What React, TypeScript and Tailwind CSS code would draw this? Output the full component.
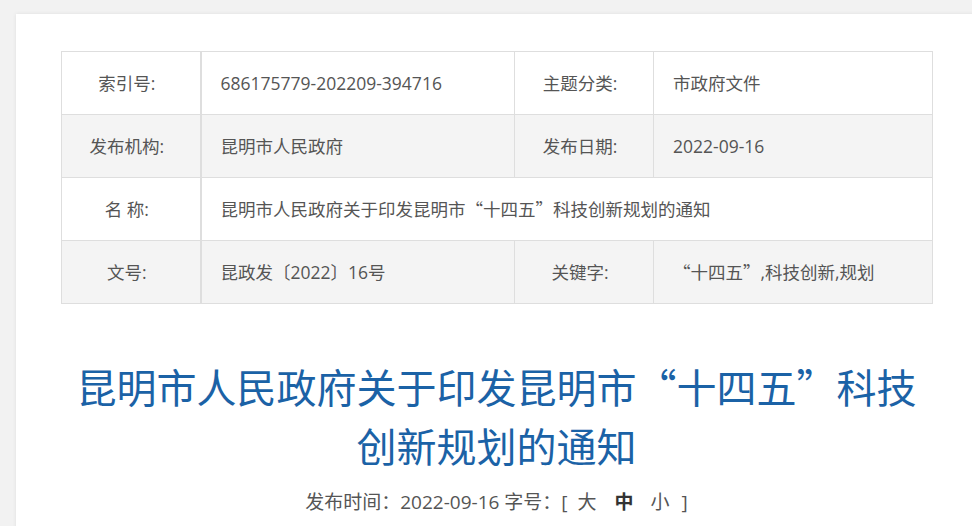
import React from "react";

const font = { fontFamily: '"Open Sans", "Noto Sans CJK SC", "Noto Sans", sans-serif' };
const cjk = { fontFamily: '"Noto Sans CJK SC", "Noto Sans", sans-serif' };

function Q({ children }: { children: React.ReactNode }) {
  return <span style={cjk}>{children}</span>;
}

export default function App() {
  const cellL = "border border-[#dedede] text-center text-[17.5px] text-[#555] h-[63px] p-0";
  const cellV = "border border-[#dedede] text-left text-[17.5px] text-[#555] h-[63px] pl-[19px] pr-2";
  return (
    <div className="w-[972px] h-[526px] overflow-hidden bg-[#f2f2f2]" style={font}>
      <div className="ml-[16px] mt-[14px] w-[961px] h-[600px] bg-white shadow-[0_0_4px_rgba(0,0,0,0.08)] pt-[37px] pl-[45px]">
        <table className="w-[871px] border-collapse table-fixed">
          <colgroup>
            <col className="w-[139px]" />
            <col className="w-[314px]" />
            <col className="w-[139px]" />
            <col className="w-[279px]" />
          </colgroup>
          <tbody>
            <tr className="bg-white">
              <td className={cellL + " border-r-2 pr-[8px]"}>索引号:</td>
              <td className={cellV}>686175779-202209-394716</td>
              <td className={cellL + " pr-[8px]"}>主题分类:</td>
              <td className={cellV}>市政府文件</td>
            </tr>
            <tr className="bg-[#f4f4f4]">
              <td className={cellL + " border-r-2 pr-[8px]"}>发布机构:</td>
              <td className={cellV}>昆明市人民政府</td>
              <td className={cellL + " pr-[8px]"}>发布日期:</td>
              <td className={cellV}>2022-09-16</td>
            </tr>
            <tr className="bg-white">
              <td className={cellL + " border-r-2 pr-[8px]"}>名 称:</td>
              <td className={cellV} colSpan={3}>
                昆明市人民政府关于印发昆明市<Q>“</Q>十四五<Q>”</Q>科技创新规划的通知
              </td>
            </tr>
            <tr className="bg-[#f4f4f4]">
              <td className={cellL + " border-r-2 pr-[8px]"}>文号:</td>
              <td className={cellV}>昆政发〔2022〕16号</td>
              <td className={cellL + " pr-[8px]"}>关键字:</td>
              <td className={cellV}>
                <Q>“</Q>十四五<Q>”</Q>,科技创新,规划
              </td>
            </tr>
          </tbody>
        </table>
        <h1 className="w-[871px] mt-[53px] text-center text-[40px] leading-[59px] text-[#1b62a6] font-normal" style={cjk}>
          昆明市人民政府关于印发昆明市“十四五”科技创新规划的通知
        </h1>
        <div className="w-[871px] mt-[12px] text-center text-[19px] leading-[30px] text-[#555]">
          发布时间：2022-09-16 字号：[<span className="ml-[10px]">大</span>
          <span className="ml-[18px] font-bold text-[#333]">中</span>
          <span className="ml-[17px] mr-[12px]">小</span>]
        </div>
      </div>
    </div>
  );
}
